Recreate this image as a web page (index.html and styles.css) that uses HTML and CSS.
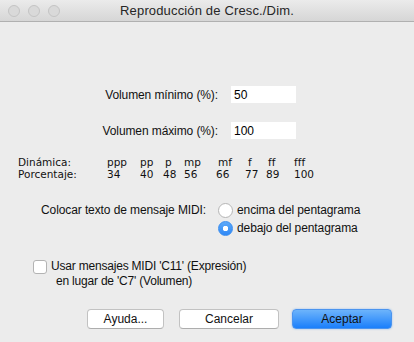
FILE: index.html
```html
<!DOCTYPE html>
<html lang="es">
<head>
    <meta charset="UTF-8">
    <meta name="viewport" content="width=device-width, initial-scale=1.0">
    <title>Reproducción de Cresc./Dim.</title>
    <link rel="stylesheet" href="styles.css">
</head>
<body>
    <div class="window">
        <div class="titlebar">
            <div class="lights">
                <span class="light"></span>
                <span class="light"></span>
                <span class="light"></span>
            </div>
            <div class="title">Reproducción de Cresc./Dim.</div>
        </div>

        <div class="content">
            <div class="fields">
                <label for="vmin">Volumen mínimo (%):</label>
                <input type="text" id="vmin" value="50">
                <label for="vmax">Volumen máximo (%):</label>
                <input type="text" id="vmax" value="100">
            </div>

            <div class="dynamics">
                <span>Dinámica:</span>
                <span>ppp</span><span>pp</span><span>p</span><span>mp</span>
                <span>mf</span><span>f</span><span>ff</span><span>fff</span>
                <span>Porcentaje:</span>
                <span>34</span><span>40</span><span class="shift">48</span><span>56</span>
                <span class="shift">66</span><span class="shift3">77</span><span class="shift">89</span><span>100</span>
            </div>

            <div class="midi">
                <span class="midi-label">Colocar texto de mensaje MIDI:</span>
                <div class="radios">
                    <label class="radio"><span class="dot"></span>encima del pentagrama</label>
                    <label class="radio"><span class="dot checked"></span>debajo del pentagrama</label>
                </div>
            </div>

            <label class="check">
                <span class="box"></span>
                <span class="check-text">Usar mensajes MIDI 'C11' (Expresión)<br><span class="indent">en lugar de 'C7' (Volumen)</span></span>
            </label>

            <div class="buttons">
                <button class="btn btn-help">Ayuda...</button>
                <button class="btn btn-cancel">Cancelar</button>
                <button class="btn btn-ok">Aceptar</button>
            </div>
        </div>
    </div>
</body>
</html>
```

FILE: styles.css
```css
* {
    margin: 0;
    padding: 0;
    box-sizing: border-box;
}

body {
    font-family: 'Liberation Sans', Arial, sans-serif;
    font-size: 12px;
    letter-spacing: -0.1px;
    color: #111111;
    background-color: #ececec;
    width: 414px;
    height: 342px;
    overflow: hidden;
}

.window {
    display: flex;
    flex-direction: column;
    height: 100%;
}

/* barre de titre */
.titlebar {
    position: relative;
    height: 22px;
    background: linear-gradient(#ebebeb, #d6d6d6);
    border-bottom: 1px solid #b0b0b0;
    display: flex;
    align-items: center;
    justify-content: center;
}

.lights {
    position: absolute;
    left: 8px;
    top: 5px;
    display: flex;
    gap: 8px;
}

.light {
    width: 12px;
    height: 12px;
    border-radius: 50%;
    background-color: #d9d9d9;
    border: 1px solid #c4c4c4;
}

.title {
    font-size: 13px;
    letter-spacing: 0.15px;
    color: #262626;
}

.content {
    padding-top: 64px;
}

/* champs de volume */
.fields {
    display: grid;
    grid-template-columns: 210px 65px;
    column-gap: 13px;
    row-gap: 19px;
    margin-left: 8px;
    align-items: center;
}

.fields label {
    text-align: right;
}

.fields input {
    height: 17px;
    border: none;
    background-color: #ffffff;
    font-family: inherit;
    font-size: 12px;
    color: #000;
    padding: 0 3px;
    outline: none;
}

/* tableau des dynamiques */
.dynamics {
    display: grid;
    grid-template-columns: 89px 33px 25px 19px 34px 30px 20px 26px 40px;
    margin: 17px 0 0 18px;
    font-family: 'DejaVu Sans', Verdana, sans-serif;
    font-size: 10.5px;
    letter-spacing: 0;
    line-height: 12px;
}

.shift {
    margin-left: -2px;
}

.shift3 {
    margin-left: -3px;
}

/* texte MIDI */
.midi {
    display: flex;
    margin: 21px 0 0 41px;
}

.midi-label {
    width: 177px;
    white-space: nowrap;
    line-height: 18px;
}

.radios {
    display: flex;
    flex-direction: column;
}

.radio {
    display: flex;
    align-items: center;
    height: 18px;
    gap: 4px;
}

.dot {
    width: 15px;
    height: 15px;
    border-radius: 50%;
    background-color: #ffffff;
    border: 1px solid #b5b5b5;
}

.dot.checked {
    background: radial-gradient(circle, #ffffff 2.5px, transparent 3px), linear-gradient(#5daaf9, #2f88f6);
    border-color: #3a8ef0;
}

/* case à cocher */
.check {
    display: flex;
    align-items: flex-start;
    gap: 4px;
    margin: 22px 0 0 33px;
    line-height: 15px;
    letter-spacing: -0.2px;
}

.box {
    width: 14px;
    height: 14px;
    margin-top: 1px;
    border-radius: 3px;
    background-color: #ffffff;
    border: 1px solid #b3b3b3;
}

.indent {
    padding-left: 5px;
}

/* boutons */
.buttons {
    display: flex;
    margin: 20px 0 0 87px;
    gap: 15px;
}

.btn {
    height: 20px;
    font-family: inherit;
    font-size: 12px;
    letter-spacing: 0;
    color: #111111;
    background-color: #ffffff;
    border: 1px solid #c2c2c2;
    border-bottom-color: #adadad;
    border-radius: 4px;
}

.btn-help {
    width: 77px;
}

.btn-cancel {
    width: 100px;
}

.btn-ok {
    width: 100px;
    margin-left: -2px;
    background: linear-gradient(#6db4fb, #1b7ffb);
    border-color: #4b94ef;
    box-shadow: 0 0 2px rgba(70, 150, 240, 0.6);
}
```
